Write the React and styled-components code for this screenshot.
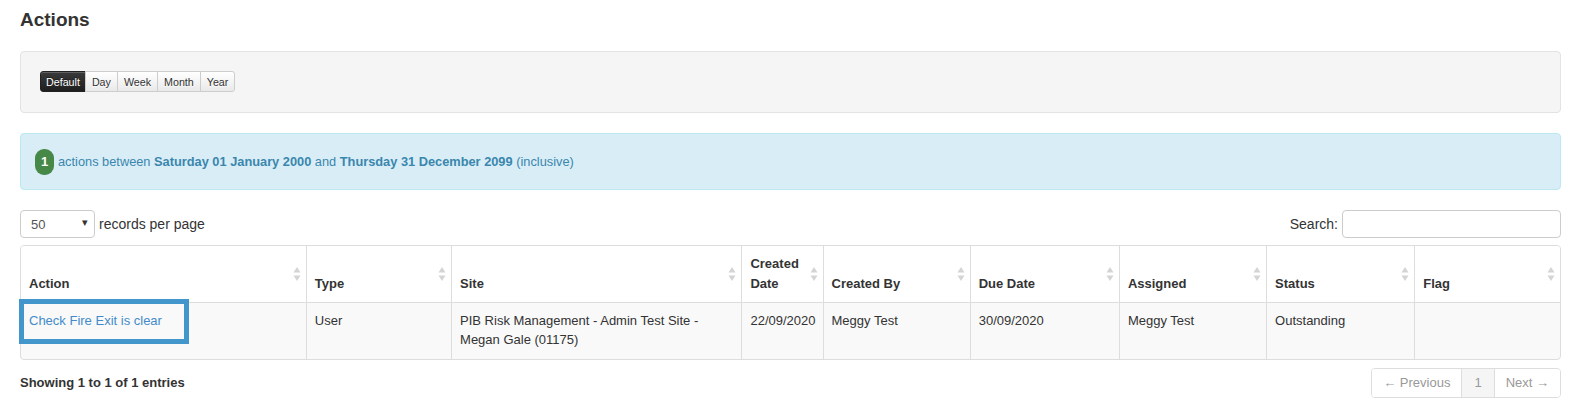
import styled, { createGlobalStyle } from "styled-components";

const GlobalStyle = createGlobalStyle`
    body {
        margin: 0;
        background: #fff;
        font-family: "Liberation Sans", Arial, sans-serif;
        font-size: 13px;
        color: #333;
    }
    * { box-sizing: border-box; }
`;

const Page = styled.div`
    padding: 9px 11px 0 20px;
`;

const Title = styled.h2`
    margin: 0 0 20px;
    font-size: 19px;
    line-height: 22px;
    font-weight: bold;
    color: #333;
`;

const Well = styled.div`
    background: #f5f5f5;
    border: 1px solid #e3e3e3;
    border-radius: 4px;
    padding: 19px;
    height: 62px;
    margin-bottom: 20px;
`;

const BtnGroup = styled.div`
    display: inline-flex;
`;

const RangeButton = styled.button`
    font-family: inherit;
    font-size: 10.7px;
    height: 21px;
    padding: 0 6px;
    margin: 0 0 0 -1px;
    border: 1px solid ${(p) => (p.$active ? "#222" : "#cdcdcd")};
    color: ${(p) => (p.$active ? "#fff" : "#333")};
    background: ${(p) =>
        p.$active
            ? "linear-gradient(#3a3a3a, #1f1f1f)"
            : "linear-gradient(#ffffff, #e9e9e9)"};
    text-shadow: ${(p) => (p.$active ? "0 -1px 0 rgba(0,0,0,.4)" : "0 1px 1px rgba(255,255,255,.75)")};
    box-shadow: inset 0 1px 0 rgba(255, 255, 255, 0.2);
    &:first-child {
        margin-left: 0;
        padding: 0 5px;
        border-radius: 3px 0 0 3px;
    }
    &:last-child {
        border-radius: 0 3px 3px 0;
    }
`;

const Alert = styled.div`
    display: flex;
    align-items: center;
    gap: 4px;
    background: #d9edf7;
    border: 1px solid #bce8f1;
    border-radius: 4px;
    color: #3a87ad;
    height: 57px;
    padding: 0 14px;
    font-size: 12.8px;
    margin-bottom: 20px;
`;

const Badge = styled.span`
    display: inline-flex;
    align-items: center;
    justify-content: center;
    min-width: 19px;
    height: 26px;
    padding: 0 5px;
    background: #468847;
    color: #fff;
    font-weight: bold;
    font-size: 13px;
    border-radius: 9px;
`;

const Strong = styled.b`
    font-weight: bold;
`;

const Controls = styled.div`
    display: flex;
    justify-content: space-between;
    align-items: center;
    margin-bottom: 7px;
`;

const Label = styled.label`
    display: flex;
    align-items: center;
    gap: 4px;
    font-size: 14px;
    color: #333;
`;

const SelectBox = styled.div`
    position: relative;
    width: 75px;
    height: 28px;
    border: 1px solid #ccc;
    border-radius: 4px;
    background: #fff;
    display: flex;
    align-items: center;
    padding-left: 10px;
    font-size: 13px;
    color: #555;
    &::after {
        content: "▾";
        position: absolute;
        right: 6px;
        top: 5px;
        font-size: 11px;
        color: #333;
    }
`;

const SearchInput = styled.input`
    width: 219px;
    height: 28px;
    border: 1px solid #ccc;
    border-radius: 4px;
    padding: 0 8px;
    font-family: inherit;
    font-size: 13px;
`;

const TableWrap = styled.div`
    border: 1px solid #ddd;
    border-radius: 4px;
    background: #f9f9f9;
`;

const Table = styled.table`
    width: 100%;
    border-collapse: collapse;
    table-layout: fixed;
    font-size: 13px;
    line-height: 19px;
`;

const Th = styled.th`
    position: relative;
    text-align: left;
    vertical-align: bottom;
    font-weight: bold;
    line-height: 20px;
    padding: 8px 20px 8px 8px;
    border-left: 1px solid #ddd;
    border-bottom: 1px solid #ddd;
    background: #fff;
    &:first-child {
        border-left: none;
        border-top-left-radius: 3px;
    }
    &:last-child {
        border-top-right-radius: 3px;
    }
`;

const Td = styled.td`
    vertical-align: top;
    padding: 8px 8px 9px;
    border-left: 1px solid #ddd;
    height: 56px;
    &:first-child {
        border-left: none;
    }
`;

const SortIcon = styled.svg`
    position: absolute;
    right: 5px;
    top: 50%;
    margin-top: -8px;
`;

const FocusLink = styled.a`
    position: relative;
    z-index: 1;
    display: inline-block;
    color: #428bca;
    text-decoration: none;
    margin: -7px 0 -9px -5px;
    padding: 7px 22px 9px 5px;
    outline: 5px solid #4396cc;
`;

const Footer = styled.div`
    display: flex;
    justify-content: space-between;
    align-items: center;
    margin-top: 8px;
`;

const Info = styled.div`
    font-weight: bold;
    font-size: 13px;
    color: #333;
`;

const Pager = styled.div`
    display: flex;
    border: 1px solid #ddd;
    border-radius: 4px;
    height: 30px;
    overflow: hidden;
`;

const PageItem = styled.span`
    display: flex;
    align-items: center;
    padding: 0 ${(p) => p.$pad}px;
    color: #999;
    font-size: 13px;
    background: ${(p) => (p.$current ? "#f5f5f5" : "#fff")};
    & + & {
        border-left: 1px solid #ddd;
    }
`;

const columns = [
    { label: "Action", width: 285 },
    { label: "Type", width: 145 },
    { label: "Site", width: 290 },
    { label: "Created Date", width: 81 },
    { label: "Created By", width: 147 },
    { label: "Due Date", width: 149 },
    { label: "Assigned", width: 147 },
    { label: "Status", width: 148 },
    { label: "Flag", width: 145 },
];

function Sort() {
    return (
        <SortIcon width="8" height="16" viewBox="0 0 8 16">
            <polygon points="4,1 7.5,6.5 0.5,6.5" fill="#d4d4d4" />
            <polygon points="0.5,9.5 7.5,9.5 4,15" fill="#d4d4d4" />
        </SortIcon>
    );
}

export default function App() {
    return (
        <>
            <GlobalStyle />
            <Page>
                <Title>Actions</Title>
                <Well>
                    <BtnGroup>
                        <RangeButton $active>Default</RangeButton>
                        <RangeButton>Day</RangeButton>
                        <RangeButton>Week</RangeButton>
                        <RangeButton>Month</RangeButton>
                        <RangeButton>Year</RangeButton>
                    </BtnGroup>
                </Well>
                <Alert>
                    <Badge>1</Badge>
                    <span>
                        actions between <Strong>Saturday 01 January 2000</Strong> and{" "}
                        <Strong>Thursday 31 December 2099</Strong> (inclusive)
                    </span>
                </Alert>
                <Controls>
                    <Label>
                        <SelectBox>50</SelectBox>
                        records per page
                    </Label>
                    <Label>
                        Search:
                        <SearchInput type="text" />
                    </Label>
                </Controls>
                <TableWrap>
                    <Table>
                        <colgroup>
                            {columns.map((c) => (
                                <col key={c.label} style={{ width: c.width }} />
                            ))}
                        </colgroup>
                        <thead>
                            <tr>
                                {columns.map((c) => (
                                    <Th key={c.label}>
                                        {c.label}
                                        <Sort />
                                    </Th>
                                ))}
                            </tr>
                        </thead>
                        <tbody>
                            <tr>
                                <Td>
                                    <FocusLink href="#">Check Fire Exit is clear</FocusLink>
                                </Td>
                                <Td>User</Td>
                                <Td>PIB Risk Management - Admin Test Site - Megan Gale (01175)</Td>
                                <Td>22/09/2020</Td>
                                <Td>Meggy Test</Td>
                                <Td>30/09/2020</Td>
                                <Td>Meggy Test</Td>
                                <Td>Outstanding</Td>
                                <Td></Td>
                            </tr>
                        </tbody>
                    </Table>
                </TableWrap>
                <Footer>
                    <Info>Showing 1 to 1 of 1 entries</Info>
                    <Pager>
                        <PageItem $pad={11}>← Previous</PageItem>
                        <PageItem $pad={12} $current>1</PageItem>
                        <PageItem $pad={11}>Next →</PageItem>
                    </Pager>
                </Footer>
            </Page>
        </>
    );
}
